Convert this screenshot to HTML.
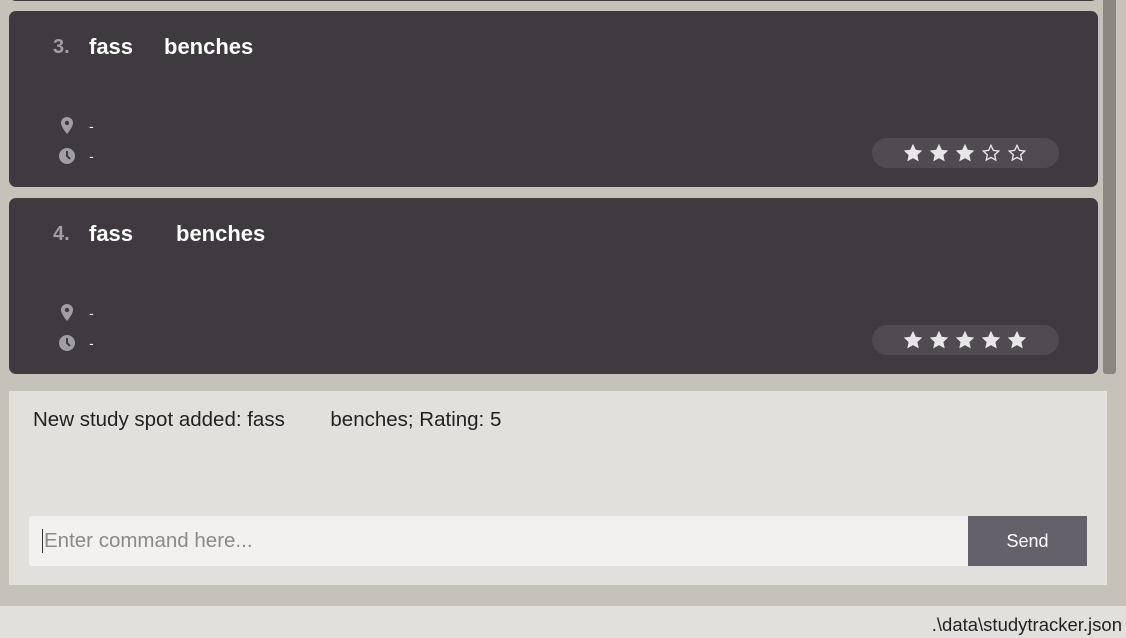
<!DOCTYPE html>
<html><head><style>
body{margin:0;width:1126px;height:638px;background:#c5c2b9;position:relative;overflow:hidden;font-family:"Liberation Sans",sans-serif}
.card{position:absolute;left:9px;width:1089px;background:#3e3a40;border-radius:7px}
.t{position:absolute;top:23px;font-size:22px;font-weight:bold;color:#fff}
.n{position:absolute;left:44px;top:25px;font-size:20px;font-weight:bold;color:#a19ea3}
.d{position:absolute;left:80px;color:#fff;font-size:14px}
.ic{position:absolute;left:50px}
.pill{position:absolute;left:863px;width:187px;height:30px;background:#4f4b51;border-radius:15px}
.pill svg{position:absolute;top:6px}
</style></head><body>
<div class="card" style="top:-20px;height:21px"></div>
<div style="position:absolute;left:1103px;top:0;width:13px;height:374px;background:#8a887e;border-radius:0 0 3px 3px"></div>

<div class="card" style="top:11px;height:176px">
<div class="n">3.</div><div class="t" style="left:80px">fass</div><div class="t" style="left:155px">benches</div>
<svg class="ic" style="top:105px" width="16" height="20" viewBox="0 0 16 20"><path d="M8 1a6 6 0 0 0-6 6c0 4 6 11 6 11s6-7 6-11a6 6 0 0 0-6-6z" fill="#a19ea3"/><circle cx="8" cy="7" r="2.2" fill="#3e3a40"/></svg>
<div class="d" style="top:107px">-</div>
<svg class="ic" style="top:136px" width="18" height="18" viewBox="0 0 18 18"><circle cx="8" cy="9" r="8" fill="#a19ea3"/><path d="M8 4v5l3 3" stroke="#3e3a40" stroke-width="2" fill="none"/></svg>
<div class="d" style="top:137px">-</div>
<div class="pill" style="top:127px" id="p1"></div>
</div>

<div class="card" style="top:198px;height:176px">
<div class="n">4.</div><div class="t" style="left:80px">fass</div><div class="t" style="left:167px">benches</div>
<svg class="ic" style="top:105px" width="16" height="20" viewBox="0 0 16 20"><path d="M8 1a6 6 0 0 0-6 6c0 4 6 11 6 11s6-7 6-11a6 6 0 0 0-6-6z" fill="#a19ea3"/><circle cx="8" cy="7" r="2.2" fill="#3e3a40"/></svg>
<div class="d" style="top:107px">-</div>
<svg class="ic" style="top:136px" width="18" height="18" viewBox="0 0 18 18"><circle cx="8" cy="9" r="8" fill="#a19ea3"/><path d="M8 4v5l3 3" stroke="#3e3a40" stroke-width="2" fill="none"/></svg>
<div class="d" style="top:137px">-</div>
<div class="pill" style="top:127px" id="p2"></div>
</div>

<div style="position:absolute;left:9px;top:391px;width:1098px;height:194px;background:#e1e0dc">
<div style="position:absolute;left:24px;top:17px;font-size:20.5px;color:#222">New study spot added: fass&nbsp;&nbsp;&nbsp;&nbsp;&nbsp;&nbsp;&nbsp;&nbsp;benches; Rating: 5</div>
<div style="position:absolute;left:20px;top:125px;width:939px;height:50px;background:#f2f1ef;border-radius:3px 0 0 3px">
<div style="position:absolute;left:13px;top:13px;width:1px;height:24px;background:#333"></div>
<div style="position:absolute;left:15px;top:13px;font-size:20.5px;color:#8c8a86">Enter command here...</div></div>
<div style="position:absolute;left:959px;top:125px;width:119px;height:50px;background:#65616b;color:#fff;font-size:18px;text-align:center;line-height:50px">Send</div>
</div>
<div style="position:absolute;left:0;top:606px;width:1126px;height:32px;background:#e1e0dc"><div style="position:absolute;right:4px;top:8px;font-size:18.5px;color:#222">.\data\studytracker.json</div></div>
<script>
function star(x,f){return '<svg style="left:'+x+'px" width="18" height="18" viewBox="0 0 20 20"><path d="M10 1.5l2.6 5.6 6 .7-4.5 4.1 1.2 6-5.3-3-5.3 3 1.2-6L1.4 7.8l6-.7z" fill="'+(f?'#e8e6e8':'none')+'" stroke="#e8e6e8" stroke-width="1.5"/></svg>';}
['p1','p2'].forEach(function(id,k){var h='';for(var i=0;i<5;i++)h+=star(32+i*26,k==1||i<3);document.getElementById(id).innerHTML=h;});
</script>
</body></html>
